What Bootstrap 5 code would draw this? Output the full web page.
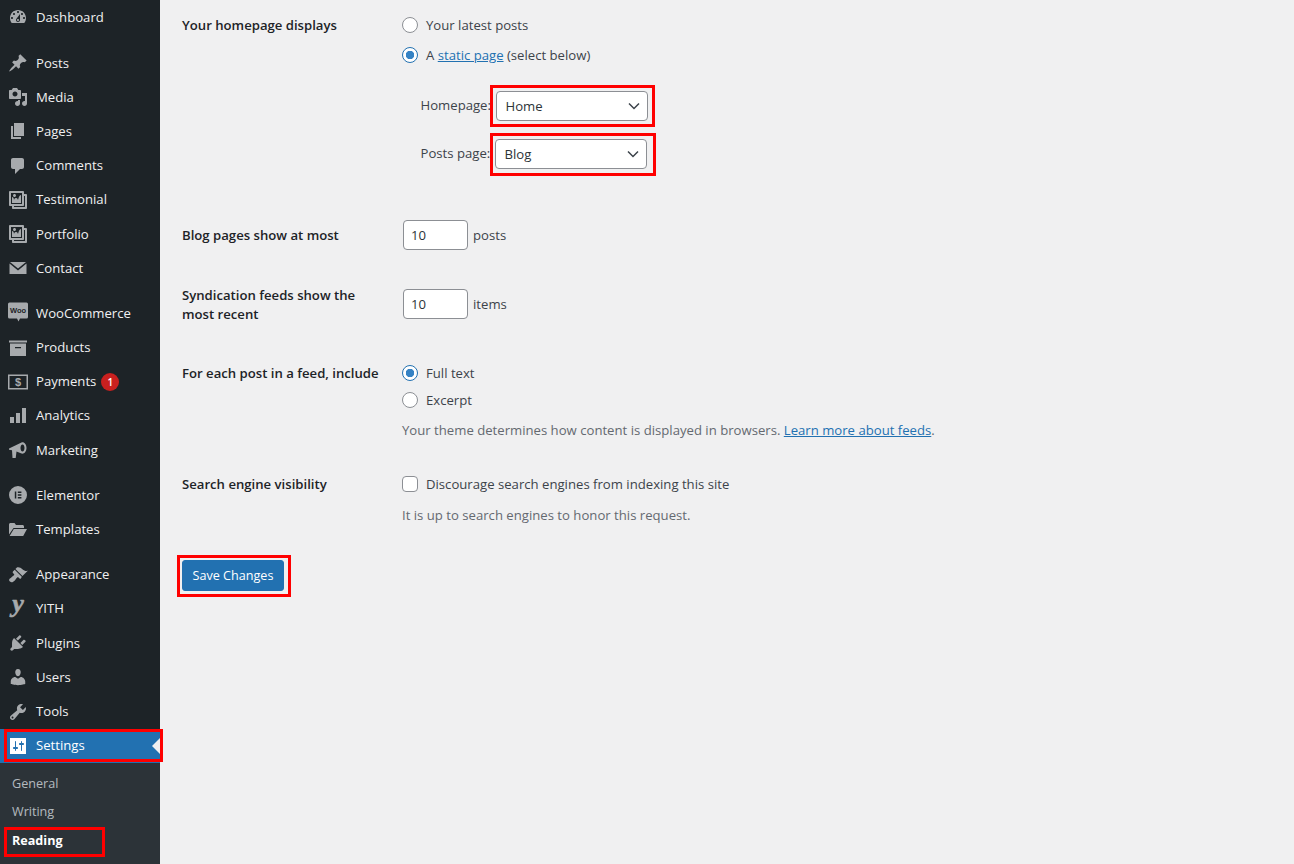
<!DOCTYPE html>
<html lang="en">
<head>
<meta charset="utf-8">
<title>Reading Settings</title>
<link rel="stylesheet" href="https://cdn.jsdelivr.net/npm/bootstrap@5.3.0/dist/css/bootstrap.min.css">
<style>
html,body{height:864px;overflow:hidden}
body{background:#f0f0f1;color:#3c434a;font-family:"Open Sans","Noto Sans",sans-serif;font-size:13.15px;line-height:19px}
.wp-side{width:160px;height:864px;background:#1d2327;flex:none}
.wp-item{height:34.2px;color:#f0f0f1;text-decoration:none;position:relative}
.wp-item svg{width:20px;height:20px;margin-left:8px;margin-right:8px;flex:none;fill:#a7aaad;overflow:visible}
.wp-gap{height:11px}
.wp-gap-first{height:11.8px}
.wp-gap-last{height:11.1px}
.wp-current{background:#2271b1;color:#fff}
.wp-current svg{fill:#fff}
.wp-arrow{position:absolute;right:0;top:9px;border:8px solid transparent;border-right-color:#f0f0f1;border-left:0}
.wp-count{width:18px;height:18px;border-radius:50%;background:#c9201f;color:#fff;font-size:10px;line-height:18px;margin-left:5px;text-align:center;font-weight:600}
.wp-sub{background:#2c3338;padding-top:7px;height:110px}
.wp-sub a{display:block;height:28.5px;line-height:28.5px;padding-left:12px;font-size:12.6px;color:rgba(240,246,252,.7);text-decoration:none;position:relative}
.wp-sub a.wp-on{color:#fff;font-weight:700}
.wp-mark{position:absolute;border:3px solid #f00;pointer-events:none}
.mark-settings{left:4px;top:.8px;width:159px;height:33px}
.mark-reading{left:4px;top:.3px;width:101px;height:30px}
.mark-home{left:-6px;right:-7px;top:-6px;bottom:-6px}
.mark-blog{left:-5px;right:-9px;top:-6px;bottom:-7px}
.mark-save{left:-5px;right:-7px;top:-5px;bottom:-6px}
.wp-main{padding:15.5px 0 0 22px}
.wp-head{width:220px;flex:none;font-weight:600;color:#1d2327;padding-right:18px}
.wp-line{height:19px}
.wp-line .form-check-input{width:16px;height:16px;margin:0 8px 0 0;border:1px solid #8c8f94;background-color:#fff;box-shadow:none;flex:none}
.wp-line .form-check-input:checked{background-color:#fff;border-color:#2271b1;background-image:radial-gradient(circle,#3582c4 0,#3582c4 4px,transparent 4.5px)}
.wp-line .form-check-input[type=checkbox]{border-radius:4px}
.wp-main a.wp-link{color:#2271b1}
.wp-select{width:152px;height:30px;padding:0 24px 0 8.5px;font-size:13.15px;line-height:28px;color:#2c3338;border:1px solid #8c8f94;border-radius:4px;background-image:url("data:image/svg+xml,%3Csvg xmlns='http://www.w3.org/2000/svg' viewBox='0 0 12 8'%3E%3Cpath d='M1 1.500l5 5 5-5' fill='none' stroke='%233c434a' stroke-width='1.500'/%3E%3C/svg%3E");background-position:right 7px center;background-size:12px 8px}
.wp-num{width:65px;height:30px;padding:0 7px;font-size:13.15px;color:#2c3338;border:1px solid #8c8f94;border-radius:4px;margin-left:1px;margin-right:5px}
.wp-pair{height:30px}
.wp-pair label{width:94px;padding-left:18.5px;white-space:nowrap}
.wp-pair label.wp-l93{width:93px}
.wp-muted{color:#646970}
.wp-save{width:102px;height:31px;padding:1px 0 0;background:#2271b1;border-color:#2271b1;font-size:12.6px;color:#fff;border-radius:3px}
.mb-2x{margin-bottom:11px}
.wp-s36{margin-top:26px}
.wp-s18{margin-top:18px}
.wp-s11{margin-top:11px}
.wp-s8{margin-top:8px}
.wp-s12{margin-top:12px}
.wp-r2{margin-top:51.5px}
.wp-p55{padding-top:5.5px}
.wp-r3{margin-top:35.5px}
.wp-m35{margin-top:3.5px}
.wp-r4{margin-top:40px}
.wp-r5{margin-top:35px}
.wp-r6{margin-top:35.5px}
</style>
</head>
<body>
<div class="d-flex">
<nav class="wp-side">
  <a class="wp-item d-flex align-items-center" href="#"><svg viewBox="0 0 20 20"><path d="M3.760 16h12.480c1.100-1.370 1.760-3.110 1.760-5 0-4.420-3.580-8-8-8s-8 3.580-8 8c0 1.890.66 3.630 1.760 5zM10 4c.55 0 1 .45 1 1s-.45 1-1 1-1-.45-1-1 .45-1 1-1zM6 6c.55 0 1 .45 1 1s-.45 1-1 1-1-.45-1-1 .45-1 1-1zm8 0c.55 0 1 .45 1 1s-.45 1-1 1-1-.45-1-1 .45-1 1-1zm-5.370 5.550L12 7v6c0 1.100-.9 2-2 2s-2-.9-2-2c0-.57.24-1.080.63-1.450zM4 10c.55 0 1 .45 1 1s-.45 1-1 1-1-.45-1-1 .45-1 1-1zm12 0c.55 0 1 .45 1 1s-.45 1-1 1-1-.45-1-1 .45-1 1-1zm-5 3c0-.55-.45-1-1-1s-1 .45-1 1 .45 1 1 1 1-.45 1-1z"/></svg>Dashboard</a>
  <div class="wp-gap-first"></div>
  <a class="wp-item d-flex align-items-center" href="#"><svg viewBox="0 0 20 20"><path d="M10.440 3.020l1.820-1.820 6.360 6.350-1.830 1.820c-1.050-.68-2.480-.57-3.410.36l-.75.75c-.92.93-1.040 2.350-.35 3.410l-1.830 1.820-2.410-2.410-2.800 2.790c-.42.42-3.380 2.710-3.800 2.290s1.860-3.390 2.280-3.810l2.790-2.790L4.100 9.360l1.830-1.820c1.050.69 2.480.57 3.400-.36l.75-.75c.93-.92 1.050-2.350.36-3.410z"/></svg>Posts</a>
  <a class="wp-item d-flex align-items-center" href="#"><svg viewBox="0 0 20 20"><path d="M13 11V4c0-.55-.45-1-1-1h-1.670L9 1H5L3.670 3H2c-.55 0-1 .45-1 1v7c0 .55.45 1 1 1h10c.55 0 1-.45 1-1zM7 4.500c1.380 0 2.500 1.120 2.500 2.500S8.380 9.500 7 9.500 4.500 8.380 4.500 7 5.620 4.500 7 4.500zM14 6h5v10.500c0 1.380-1.120 2.500-2.500 2.500S14 17.880 14 16.500s1.120-2.500 2.500-2.500c.17 0 .34.02.5.05V9h-3V6zm-4 8.050V13h2v3.500c0 1.380-1.120 2.500-2.500 2.500S7 17.880 7 16.500 8.120 14 9.500 14c.17 0 .34.02.5.05z"/></svg>Media</a>
  <a class="wp-item d-flex align-items-center" href="#"><svg viewBox="0 0 20 20"><path d="M6 15V2h10v13H6zm-1 1h8v2H3V5h2v11z"/></svg>Pages</a>
  <a class="wp-item d-flex align-items-center" href="#"><svg viewBox="0 0 20 20"><path d="M5 2h9c1.100 0 2 .9 2 2v7c0 1.100-.9 2-2 2h-2l-5 5v-5H5c-1.100 0-2-.9-2-2V4c0-1.100.9-2 2-2z"/></svg>Comments</a>
  <a class="wp-item d-flex align-items-center" href="#"><svg viewBox="0 0 20 20"><path d="M16 4h1.960c.57 0 1.040.47 1.040 1.040v12.920c0 .57-.47 1.040-1.040 1.040H5.040C4.470 19 4 18.530 4 17.960V16H2.040C1.470 16 1 15.530 1 14.960V2.040C1 1.470 1.470 1 2.040 1h12.920c.57 0 1.040.47 1.040 1.040V4zM3 14h11V3H3v11zm5-8.500C8 4.670 7.330 4 6.500 4S5 4.670 5 5.500 5.670 7 6.500 7 8 6.330 8 5.500zm2 4.500s1-5 3-5v8H4V7c2 0 2 3 2 3s.33-2 2-2 2 2 2 2zm7 7V6h-1v8.960c0 .57-.47 1.040-1.040 1.040H6v1h11z"/></svg>Testimonial</a>
  <a class="wp-item d-flex align-items-center" href="#"><svg viewBox="0 0 20 20"><path d="M16 4h1.960c.57 0 1.040.47 1.040 1.040v12.920c0 .57-.47 1.040-1.040 1.040H5.040C4.470 19 4 18.530 4 17.960V16H2.040C1.470 16 1 15.530 1 14.960V2.040C1 1.470 1.470 1 2.040 1h12.920c.57 0 1.040.47 1.040 1.040V4zM3 14h11V3H3v11zm5-8.500C8 4.670 7.330 4 6.500 4S5 4.670 5 5.500 5.670 7 6.500 7 8 6.330 8 5.500zm2 4.500s1-5 3-5v8H4V7c2 0 2 3 2 3s.33-2 2-2 2 2 2 2zm7 7V6h-1v8.960c0 .57-.47 1.040-1.040 1.040H6v1h11z"/></svg>Portfolio</a>
  <a class="wp-item d-flex align-items-center" href="#"><svg viewBox="0 0 20 20"><path d="M2 4h16l-8 6.500zM1.500 5.500l8.500 7 8.500-7V16h-17z"/></svg>Contact</a>
  <div class="wp-gap"></div>
  <a class="wp-item d-flex align-items-center" href="#"><svg viewBox="0 0 20 20"><path fill-rule="evenodd" d="M1.500-.5h17A1.500 1.500 0 0 1 20 1v13a1.500 1.500 0 0 1-1.500 1.500H12l-1.500 3-1.500-3H1.500A1.500 1.500 0 0 1 0 14V1A1.500 1.500 0 0 1 1.500-.5z"/><text x="10" y="10" text-anchor="middle" font-size="7.500" font-weight="700" fill="#1d2327" font-family="Liberation Sans">Woo</text></svg>WooCommerce</a>
  <a class="wp-item d-flex align-items-center" href="#"><svg viewBox="0 0 20 20"><path fill-rule="evenodd" d="M1 2.500h18v2H1zM2 5.500h16v12.500H2zM7 9v1.300h6V9z"/></svg>Products</a>
  <a class="wp-item d-flex align-items-center" href="#"><svg viewBox="0 0 20 20"><path fill-rule="evenodd" d="M0 2.500h20v15H0zM1.500 4v12h17V4z"/><text x="10" y="14" text-anchor="middle" font-size="11" font-weight="700" fill="#a7aaad" font-family="Liberation Sans">$</text></svg>Payments<span class="wp-count">1</span></a>
  <a class="wp-item d-flex align-items-center" href="#"><svg viewBox="0 0 20 20"><path d="M2 11h4v6H2zM8 7h4v10H8zM14 2h4v15h-4z"/></svg>Analytics</a>
  <a class="wp-item d-flex align-items-center" href="#"><svg viewBox="0 0 20 20"><path fill-rule="evenodd" d="M1 8.500 13.500 2.500c2.800-.8 5 2.200 5 5.500s-2.200 6.300-5 5.600l-5-2-.8 6.400H4.500l-.5-7.700-3-.5zM14.500 4.500c-1.200 0-2 1.600-2 3.500s.8 3.500 2 3.500 2-1.600 2-3.500-.8-3.500-2-3.500z"/></svg>Marketing</a>
  <div class="wp-gap"></div>
  <a class="wp-item d-flex align-items-center" href="#"><svg viewBox="0 0 20 20"><path fill-rule="evenodd" d="M10 1a9 9 0 1 1 0 18 9 9 0 0 1 0-18zM6.800 6.400v7.200h1.500V6.400zM9.800 6.400v1.500h3.600V6.400zM9.800 9.250v1.500h3.600v-1.500zM9.800 12.100v1.500h3.600v-1.500z"/></svg>Elementor</a>
  <a class="wp-item d-flex align-items-center" href="#"><svg viewBox="0 0 20 20"><path d="M1 4.500C1 3.700 1.700 3 2.500 3h4l1.500 2h6.500c.8 0 1.500.7 1.500 1.500V8H5.500L1 14.500zM5.800 9H19l-3.800 7H1.600z"/></svg>Templates</a>
  <div class="wp-gap-last"></div>
  <a class="wp-item d-flex align-items-center" href="#"><svg viewBox="0 0 20 20"><path d="M14.480 11.060L7.410 3.990l1.500-1.500c.5-.56 2.300-.47 3.510.32 1.210.8 1.430 1.280 2.910 2.100 1.180.64 2.450 1.260 4.450.85zm-.71.71L6.700 4.700 4.930 6.470c-.39.39-.39 1.020 0 1.410l1.060 1.060c.39.39.39 1.030 0 1.420-.6.6-1.430 1.110-2.210 1.690-.35.26-.7.53-1.010.84C1.430 13.230.4 14.960 1.950 16.500s3.270.5 4.610-.83c.31-.31.58-.66.84-1.010.58-.78 1.090-1.610 1.690-2.210.39-.39 1.030-.39 1.420 0l1.060 1.060c.39.39 1.020.39 1.410 0z"/></svg>Appearance</a>
  <a class="wp-item d-flex align-items-center" href="#"><svg viewBox="0 0 20 20"><text x="10" y="13" text-anchor="middle" font-size="26" font-weight="700" font-style="italic" fill="#a7aaad" stroke="#a7aaad" stroke-width=".6" font-family="Liberation Serif">y</text></svg>YITH</a>
  <a class="wp-item d-flex align-items-center" href="#"><svg viewBox="0 0 20 20"><path d="M13.110 4.360L9.870 7.600 8 5.730l3.240-3.240c.35-.34 1.050-.2 1.560.32.52.51.66 1.210.31 1.550zm-8 1.770l.91-1.120 9.010 9.010-1.190.84c-.71.71-2.630 1.160-3.820 1.160H6.140L4.900 17.260c-.59.59-1.540.59-2.120 0-.59-.58-.59-1.530 0-2.120l1.240-1.240v-3.880c0-1.130.4-3.190 1.090-3.890zm7.260 3.970l3.240-3.240c.34-.35 1.040-.21 1.550.31.52.51.66 1.210.31 1.550l-3.240 3.250z"/></svg>Plugins</a>
  <a class="wp-item d-flex align-items-center" href="#"><svg viewBox="0 0 20 20"><path d="M10 9.250c-2.270 0-2.730-3.440-2.730-3.440C7 4.020 7.820 2 9.970 2c2.160 0 2.980 2.020 2.710 3.810 0 0-.41 3.440-2.680 3.440zm0 2.570L12.720 10c2.390 0 4.520 2.330 4.520 4.530v2.490s-3.650 1.130-7.240 1.130c-3.650 0-7.240-1.130-7.240-1.130v-2.490c0-2.250 1.940-4.480 4.470-4.480z"/></svg>Users</a>
  <a class="wp-item d-flex align-items-center" href="#"><svg viewBox="0 0 20 20"><path d="M16.680 9.770c-1.340 1.340-3.300 1.670-4.950.99l-5.410 6.520c-.99.99-2.590.99-3.580 0s-.99-2.590 0-3.570l6.520-5.420c-.68-1.650-.35-3.610.99-4.950 1.280-1.280 3.120-1.620 4.720-1.060l-2.890 2.890 2.820 2.820 2.860-2.870c.53 1.580.18 3.390-1.080 4.650zM3.810 16.210c.4.39 1.040.39 1.430 0 .4-.4.4-1.040 0-1.430-.39-.4-1.030-.4-1.430 0-.39.39-.39 1.030 0 1.430z"/></svg>Tools</a>
  <a class="wp-item wp-current d-flex align-items-center" href="#"><svg viewBox="0 0 20 20"><path d="M18 18V2H2v16zM8 11h1c.55 0 1 .45 1 1s-.45 1-1 1H8v1.500c0 .28-.22.5-.5.5s-.5-.22-.5-.5V13H6c-.55 0-1-.45-1-1s.45-1 1-1h1V5.500c0-.28.22-.5.5-.5s.5.22.5.5V11zm5-2h-1c-.55 0-1-.45-1-1s.45-1 1-1h1V5.500c0-.28.22-.5.5-.5s.5.22.5.5V7h1c.55 0 1 .45 1 1s-.45 1-1 1h-1v5.500c0 .28-.22.5-.5.5s-.5-.22-.5-.5V9z"/></svg>Settings<span class="wp-arrow"></span><span class="wp-mark mark-settings"></span></a>
  <div class="wp-sub">
    <a href="#">General</a>
    <a href="#">Writing</a>
    <a class="wp-on" href="#">Reading<span class="wp-mark mark-reading"></span></a>
    <a href="#">Discussion</a>
  </div>
</nav>
<main class="wp-main flex-grow-1">
  <div class="d-flex">
    <div class="wp-head">Your homepage displays</div>
    <div>
      <div class="wp-line d-flex align-items-center mb-2x"><input class="form-check-input" type="radio" name="front"><span>Your latest posts</span></div>
      <div class="wp-line d-flex align-items-center"><input class="form-check-input" type="radio" name="front" checked><span>A <a class="wp-link" href="#">static page</a> (select below)</span></div>
      <div class="wp-pair d-flex align-items-center wp-s36"><label>Homepage:</label><div class="position-relative"><select class="form-select wp-select"><option>Home</option></select><span class="wp-mark mark-home"></span></div></div>
      <div class="wp-pair d-flex align-items-center wp-s18"><label class="wp-l93">Posts page:</label><div class="position-relative"><select class="form-select wp-select"><option>Blog</option></select><span class="wp-mark mark-blog"></span></div></div>
    </div>
  </div>
  <div class="d-flex wp-r2">
    <div class="wp-head wp-p55">Blog pages show at most</div>
    <div class="d-flex align-items-center"><input class="form-control wp-num" type="number" value="10"><span>posts</span></div>
  </div>
  <div class="d-flex wp-r3">
    <div class="wp-head">Syndication feeds show the most recent</div>
    <div class="d-flex align-items-center align-self-start wp-m35"><input class="form-control wp-num" type="number" value="10"><span>items</span></div>
  </div>
  <div class="d-flex wp-r4">
    <div class="wp-head">For each post in a feed, include</div>
    <div>
      <div class="wp-line d-flex align-items-center"><input class="form-check-input" type="radio" name="feed" checked><span>Full text</span></div>
      <div class="wp-line d-flex align-items-center wp-s8"><input class="form-check-input" type="radio" name="feed"><span>Excerpt</span></div>
      <div class="wp-muted wp-s11">Your theme determines how content is displayed in browsers. <a class="wp-link" href="#">Learn more about feeds</a>.</div>
    </div>
  </div>
  <div class="d-flex wp-r5">
    <div class="wp-head">Search engine visibility</div>
    <div>
      <div class="wp-line d-flex align-items-center"><input class="form-check-input" type="checkbox"><span>Discourage search engines from indexing this site</span></div>
      <div class="wp-muted wp-s12">It is up to search engines to honor this request.</div>
    </div>
  </div>
  <div class="wp-r6 position-relative d-inline-block"><button class="btn wp-save" type="button">Save Changes</button><span class="wp-mark mark-save"></span></div>
</main>
</div>
<script src="https://cdn.jsdelivr.net/npm/bootstrap@5.3.0/dist/js/bootstrap.bundle.min.js"></script>
</body>
</html>
